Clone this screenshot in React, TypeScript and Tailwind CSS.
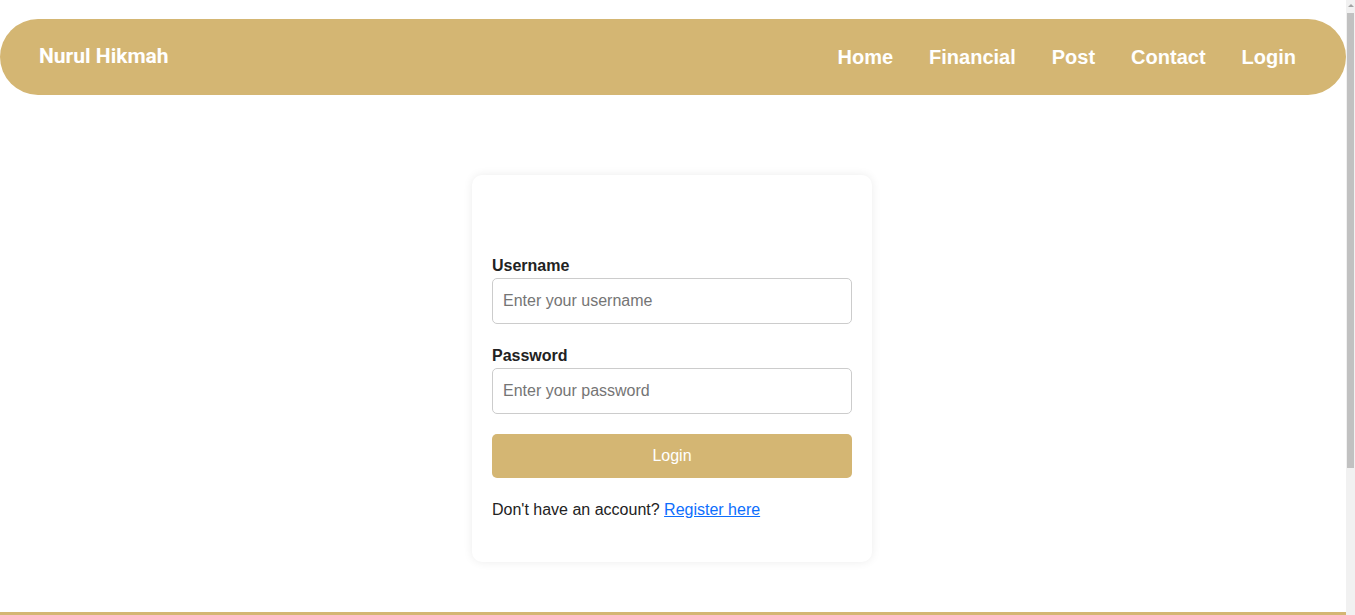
import { useState } from 'react'

const navLinks = ['Home', 'Financial', 'Post', 'Contact', 'Login']

function Navbar() {
  return (
    <nav className="mt-[19px] flex h-[76px] items-center justify-between rounded-full bg-[#d4b673] pl-[39px] pr-[50px]">
      <span className="font-['Roboto',sans-serif] text-[21px] font-bold text-white">Nurul Hikmah</span>
      <ul className="flex gap-[36px]">
        {navLinks.map((link) => (
          <li key={link}>
            <a href="#" className="text-[20px] font-bold text-white">
              {link}
            </a>
          </li>
        ))}
      </ul>
    </nav>
  )
}

function LoginCard() {
  const [username, setUsername] = useState('')
  const [password, setPassword] = useState('')

  return (
    <div className="w-[400px] rounded-[10px] bg-white p-5 shadow-[0_0_10px_rgba(0,0,0,0.08)]">
      {/* title is empty in the original */}
      <div className="h-[62px]" />
      <form onSubmit={(e) => e.preventDefault()}>
        <label className="block text-[16px] leading-[18px] font-bold text-[#222]">Username</label>
        <input
          value={username}
          onChange={(e) => setUsername(e.target.value)}
          placeholder="Enter your username"
          className="mt-[3px] block h-[46px] w-full rounded-[5px] border border-[#ccc] px-[10px] text-[16px] text-[#222] outline-none placeholder:text-[#757575]"
        />
        <label className="mt-[23px] block text-[16px] leading-[18px] font-bold text-[#222]">Password</label>
        <input
          type="password"
          value={password}
          onChange={(e) => setPassword(e.target.value)}
          placeholder="Enter your password"
          className="mt-[3px] block h-[46px] w-full rounded-[5px] border border-[#ccc] px-[10px] text-[16px] text-[#222] outline-none placeholder:text-[#757575]"
        />
        <button
          type="submit"
          className="mt-[20px] block h-[44px] w-full rounded-[5px] bg-[#d4b673] text-[16px] text-white"
        >
          Login
        </button>
      </form>
      <p className="mt-[23px] mb-[23px] text-[16px] leading-[18px] text-[#222]">
        Don't have an account?{' '}
        <a href="#" className="text-[#0d6efd] underline">
          Register here
        </a>
      </p>
    </div>
  )
}

// the browser scrollbar seen in the screenshot
function FakeScrollbar() {
  return (
    <div className="fixed top-0 right-0 flex h-[615px] w-[9px] flex-col items-center bg-[#f1f1f1]">
      <div className="mt-[4px] h-0 w-0 border-x-[3px] border-b-[3px] border-x-transparent border-b-[#a3a3a3]" />
      <div className="mt-[6px] h-[455px] w-[7px] bg-[#c1c1c1]" />
    </div>
  )
}

export default function App() {
  return (
    <div className="min-h-[700px] w-[1346px] bg-white font-['Liberation_Sans',Arial,sans-serif]">
      <Navbar />
      <main className="flex justify-center pt-[80px] pr-[2px] pb-[50px]">
        <LoginCard />
      </main>
      <footer className="h-[100px] bg-[#d4b673]" />
      <FakeScrollbar />
    </div>
  )
}
